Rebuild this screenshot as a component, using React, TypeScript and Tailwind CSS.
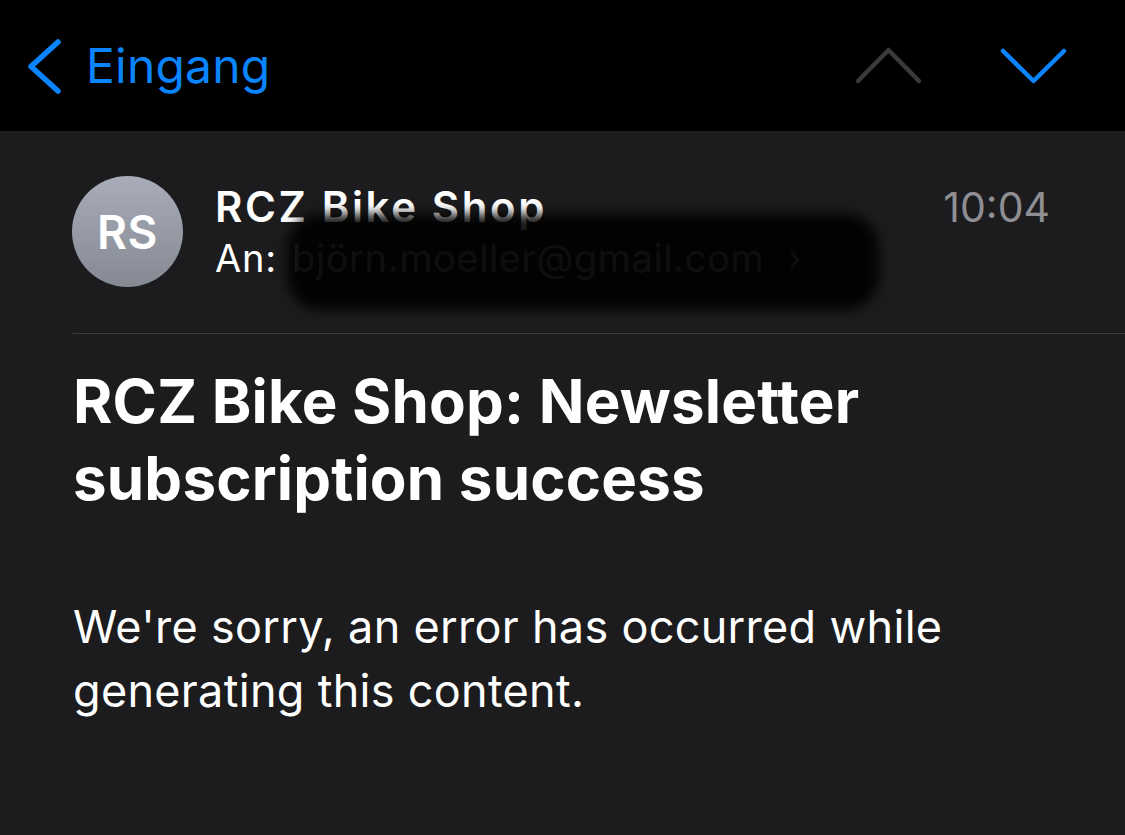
import React from "react";

function BackChevron() {
  return (
    <svg width="40" height="60" viewBox="0 0 40 60" fill="none">
      <path d="M33 6 L6 30.5 L33 55" stroke="#0a84ff" strokeWidth="5.5" strokeLinecap="round" strokeLinejoin="round" />
    </svg>
  );
}

function UpChevron() {
  return (
    <svg width="72" height="42" viewBox="0 0 72 42" fill="none">
      <path d="M5 36 L35.5 5 L66 36" stroke="#3a3a3c" strokeWidth="4.5" strokeLinecap="round" strokeLinejoin="round" />
    </svg>
  );
}

function DownChevron() {
  return (
    <svg width="72" height="42" viewBox="0 0 72 42" fill="none">
      <path d="M5 6 L35.5 36 L66 6" stroke="#0a84ff" strokeWidth="4.5" strokeLinecap="round" strokeLinejoin="round" />
    </svg>
  );
}

export default function App() {
  return (
    <div className="w-[1125px] h-[835px] overflow-hidden bg-[#1c1c1e] font-['Inter',sans-serif] antialiased">
      {/* Top bar */}
      <header className="h-[131px] bg-black flex items-center">
        <div className="flex items-center pl-[25px]">
          <BackChevron />
          <span className="ml-[21px] text-[48px] leading-none text-[#0a84ff] tracking-[0.2px]">Eingang</span>
        </div>
        <div className="ml-auto flex items-center gap-[73px] pr-[55px]">
          <UpChevron />
          <DownChevron />
        </div>
      </header>

      {/* Sender */}
      <div className="flex items-start pl-[72px] pr-[75px] pt-[45px]">
        <div className="w-[111px] h-[111px] rounded-full bg-gradient-to-b from-[#a8adb9] to-[#858993] flex items-center justify-center shrink-0">
          <span className="text-white text-[46px] font-semibold leading-none tracking-[0.5px]">RS</span>
        </div>
        <div className="ml-[32px] flex-1 relative">
          <div className="flex items-start justify-between">
            <span className="text-white text-[42px] font-semibold leading-[48px] mt-[7px] tracking-[2.6px]">RCZ Bike Shop</span>
            <span className="text-[#8e8e93] text-[41px] leading-[48px] mt-[7px]">10:04</span>
          </div>
          <div className="flex items-center text-[38px] leading-[46px] mt-[4px]">
            <span className="text-white tracking-[0.8px]">An:</span>
            <span className="ml-[15px] text-[#8e8e93] tracking-[0.6px]">björn.moeller@gmail.com</span>
            <span className="ml-[24px] text-[#8e8e93] text-[34px]">›</span>
          </div>
          {/* redaction scribble */}
          <div className="absolute left-[72px] top-[38px] w-[592px] h-[96px] rounded-[34px] bg-black/90 blur-[6px]" />
        </div>
      </div>

      {/* Divider */}
      <div className="ml-[73px] mt-[46px] border-t border-[#3a3a3c]" />

      {/* Subject */}
      <h1 className="px-[73px] pt-[29px] text-white text-[60px] font-bold leading-[77px] tracking-[0.2px]">
        RCZ Bike Shop: Newsletter
        <br />
        subscription success
      </h1>

      {/* Body */}
      <p className="px-[73px] pt-[78px] text-white text-[45px] leading-[64px] tracking-[0.3px]">
        We're sorry, an error has occurred while
        <br />
        generating this content.
      </p>
    </div>
  );
}
